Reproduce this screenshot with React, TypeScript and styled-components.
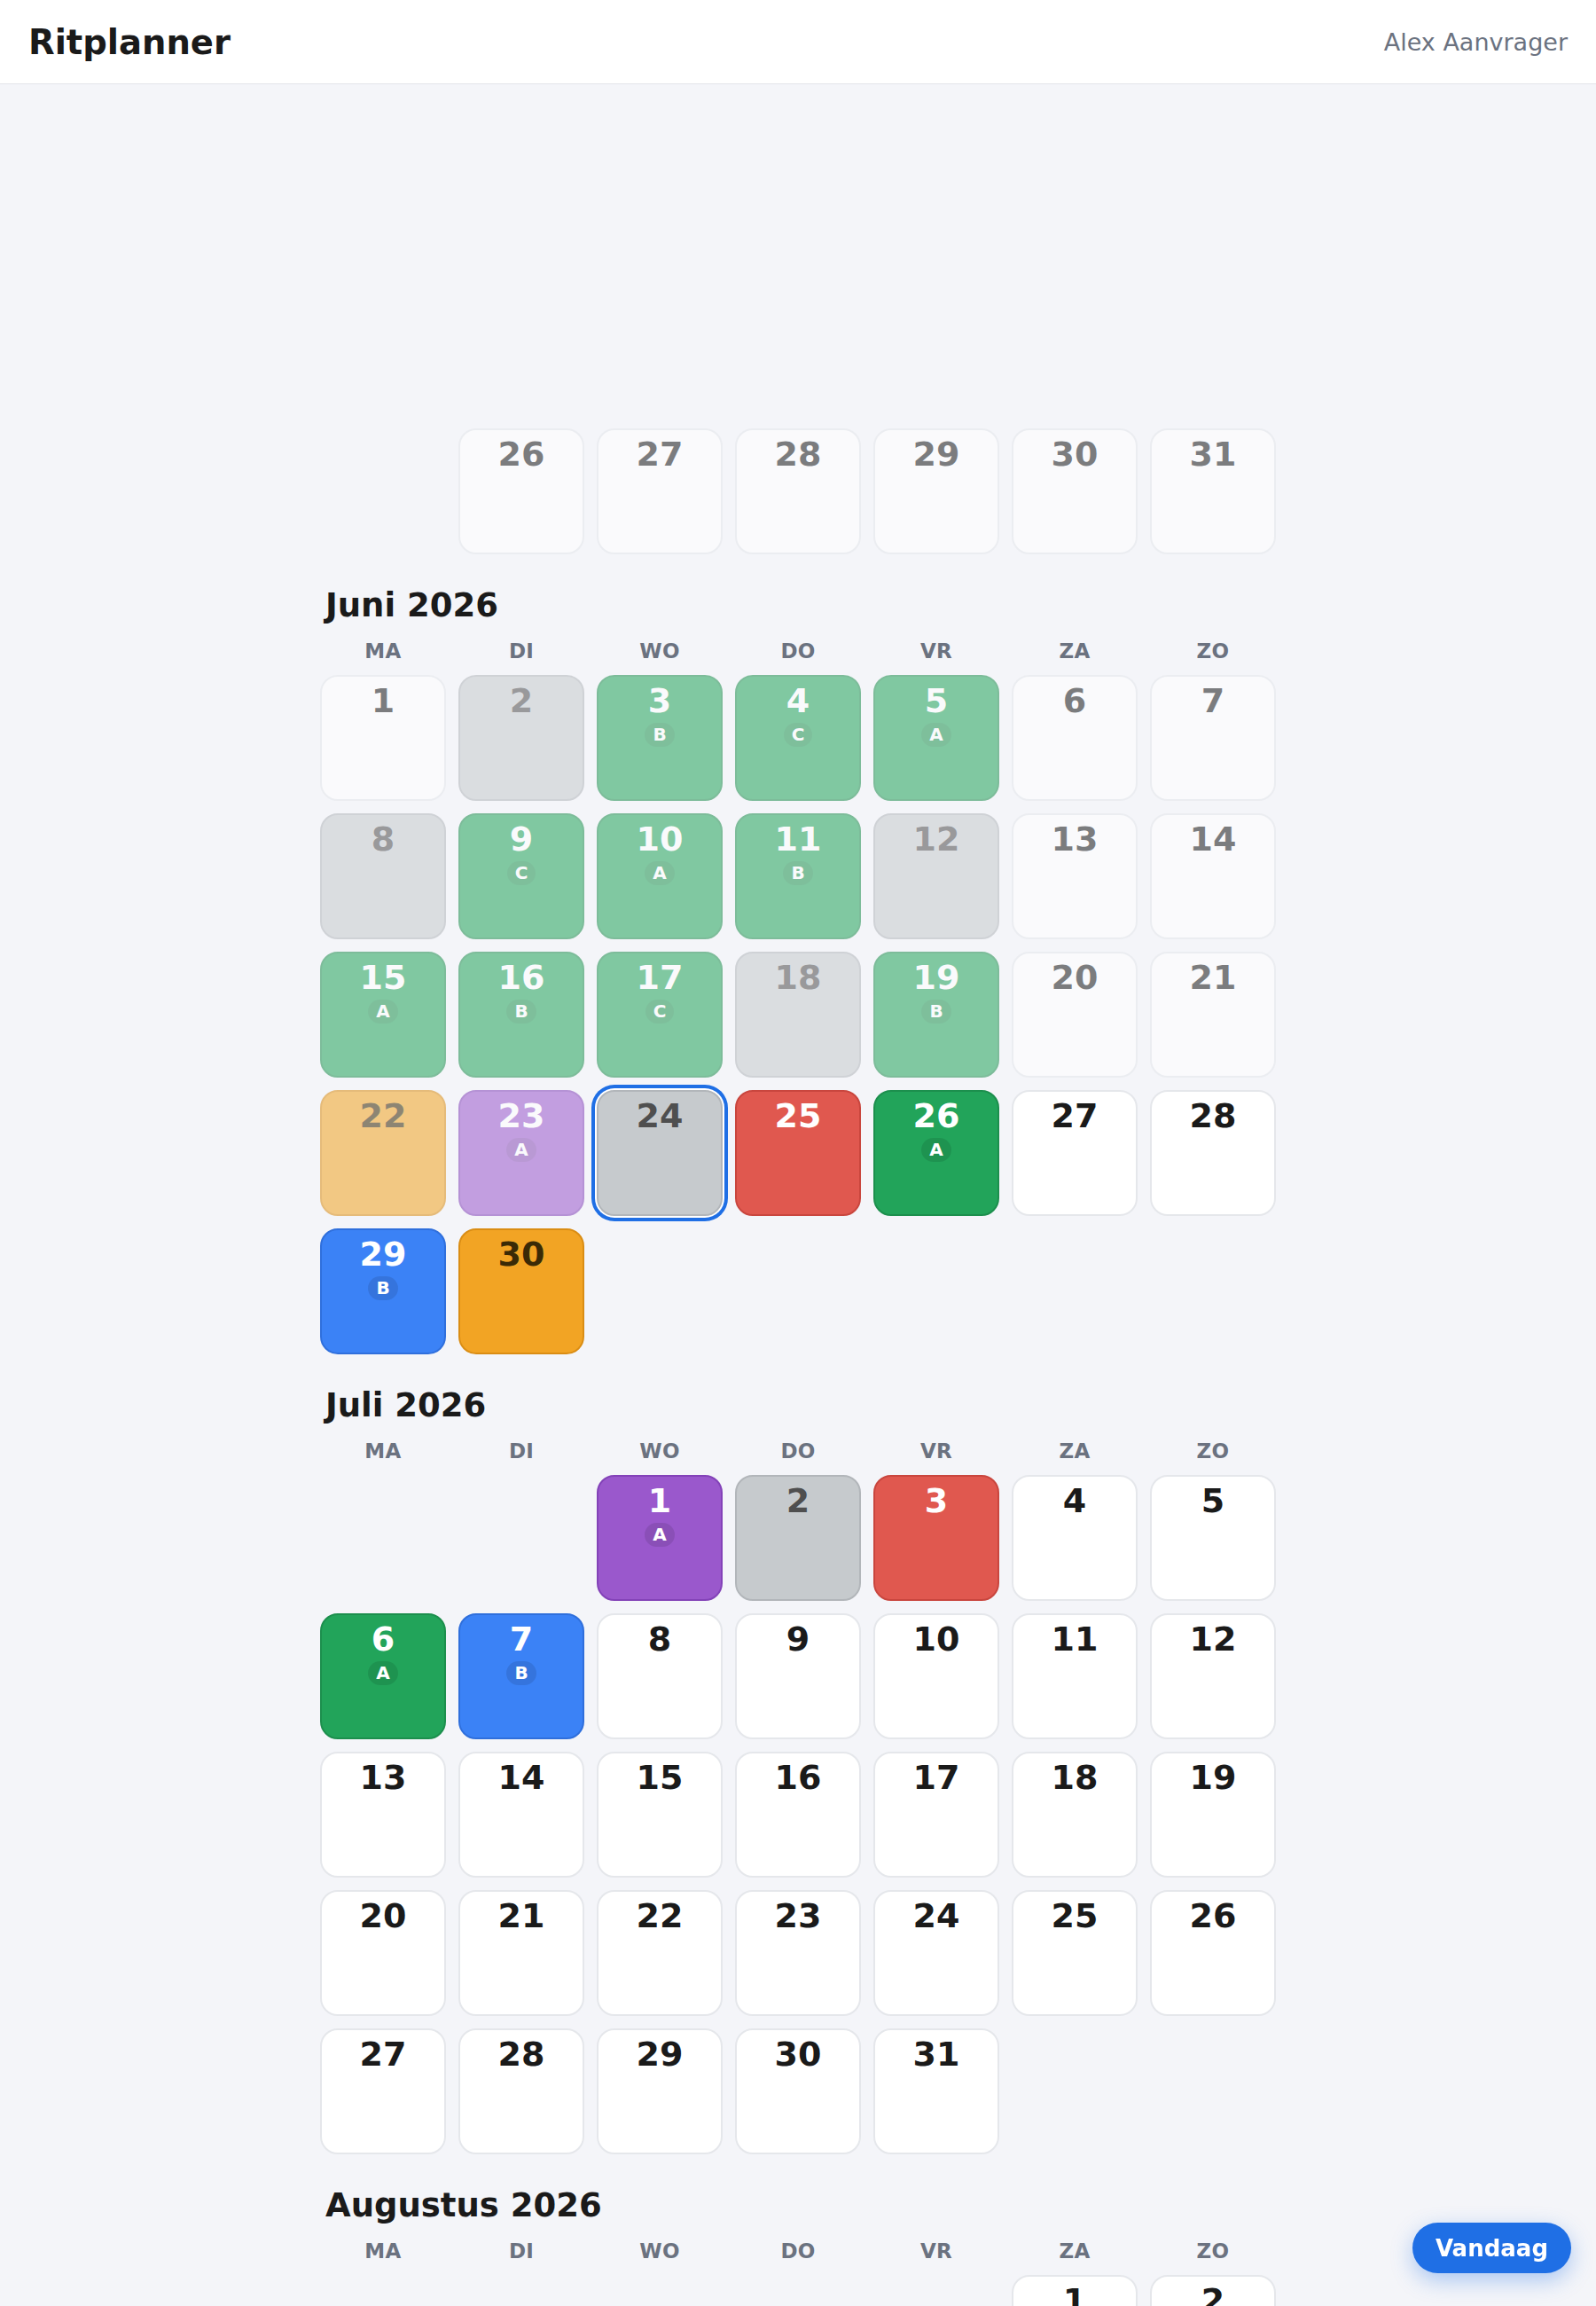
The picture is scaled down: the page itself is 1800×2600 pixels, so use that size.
import styled, { createGlobalStyle, css } from "styled-components";

type Kind = "open" | "closed" | "ride" | "cancelled" | "pending" | "assigned" | "request";

type Day = {
    day: number;
    kind: Kind;
    badge?: string;
    past?: boolean;
    today?: boolean;
};

type Month = {
    title?: string;
    offset: number;
    days: Day[];
};

const WEEKDAYS = ["MA", "DI", "WO", "DO", "VR", "ZA", "ZO"];

const range = (from: number, to: number, kind: Kind, past = false): Day[] => {
    const out: Day[] = [];
    for (let d = from; d <= to; d++) out.push({ day: d, kind, past });
    return out;
};

const months: Month[] = [
    // laatste week van mei, kop is al uit beeld gescrold
    { offset: 1, days: range(26, 31, "open", true) },
    {
        title: "Juni 2026",
        offset: 0,
        days: [
            { day: 1, kind: "open", past: true },
            { day: 2, kind: "closed", past: true },
            { day: 3, kind: "ride", badge: "B", past: true },
            { day: 4, kind: "ride", badge: "C", past: true },
            { day: 5, kind: "ride", badge: "A", past: true },
            { day: 6, kind: "open", past: true },
            { day: 7, kind: "open", past: true },
            { day: 8, kind: "closed", past: true },
            { day: 9, kind: "ride", badge: "C", past: true },
            { day: 10, kind: "ride", badge: "A", past: true },
            { day: 11, kind: "ride", badge: "B", past: true },
            { day: 12, kind: "closed", past: true },
            { day: 13, kind: "open", past: true },
            { day: 14, kind: "open", past: true },
            { day: 15, kind: "ride", badge: "A", past: true },
            { day: 16, kind: "ride", badge: "B", past: true },
            { day: 17, kind: "ride", badge: "C", past: true },
            { day: 18, kind: "closed", past: true },
            { day: 19, kind: "ride", badge: "B", past: true },
            { day: 20, kind: "open", past: true },
            { day: 21, kind: "open", past: true },
            { day: 22, kind: "pending", past: true },
            { day: 23, kind: "request", badge: "A", past: true },
            { day: 24, kind: "closed", today: true },
            { day: 25, kind: "cancelled" },
            { day: 26, kind: "ride", badge: "A" },
            { day: 27, kind: "open" },
            { day: 28, kind: "open" },
            { day: 29, kind: "assigned", badge: "B" },
            { day: 30, kind: "pending" },
        ],
    },
    {
        title: "Juli 2026",
        offset: 2,
        days: [
            { day: 1, kind: "request", badge: "A" },
            { day: 2, kind: "closed" },
            { day: 3, kind: "cancelled" },
            { day: 4, kind: "open" },
            { day: 5, kind: "open" },
            { day: 6, kind: "ride", badge: "A" },
            { day: 7, kind: "assigned", badge: "B" },
            ...range(8, 31, "open"),
        ],
    },
    { title: "Augustus 2026", offset: 5, days: range(1, 31, "open") },
];

const palette: Record<Kind, { bg: string; border: string; text: string }> = {
    open: { bg: "#ffffff", border: "#e5e7eb", text: "#1a1a1a" },
    closed: { bg: "#c6cacd", border: "#b2b6ba", text: "#4f4f4f" },
    ride: { bg: "#22a45a", border: "#1c8f4d", text: "#ffffff" },
    cancelled: { bg: "#e0584f", border: "#c9463e", text: "#ffffff" },
    pending: { bg: "#f2a424", border: "#da8d14", text: "#3a2a06" },
    assigned: { bg: "#3b82f6", border: "#2f6fdc", text: "#ffffff" },
    request: { bg: "#9a58cc", border: "#8342b8", text: "#ffffff" },
};

export default function App() {
    return (
        <>
            <GlobalStyle />
            <Header>
                <Brand>Ritplanner</Brand>
                <User>Alex Aanvrager</User>
            </Header>
            <Main>
                <TopSpacer />
                {months.map((m, i) => (
                    <Section key={i}>
                        {m.title && (
                            <>
                                <MonthTitle>{m.title}</MonthTitle>
                                <Grid>
                                    {WEEKDAYS.map((w) => (
                                        <Weekday key={w}>{w}</Weekday>
                                    ))}
                                </Grid>
                            </>
                        )}
                        <Grid>
                            {Array.from({ length: m.offset }).map((_, j) => (
                                <div key={"e" + j} />
                            ))}
                            {m.days.map((d) => (
                                <Cell key={d.day} $kind={d.kind} $past={d.past} $today={d.today}>
                                    <Num>{d.day}</Num>
                                    {d.badge && <Badge>{d.badge}</Badge>}
                                </Cell>
                            ))}
                        </Grid>
                    </Section>
                ))}
            </Main>
            <TodayButton>Vandaag</TodayButton>
        </>
    );
}

const GlobalStyle = createGlobalStyle`
    * { box-sizing: border-box; }
    body {
        margin: 0;
        background: #f4f5f9;
        font-family: "DejaVu Sans", "Liberation Sans", sans-serif;
        color: #1a1a1a;
    }
`;

const Header = styled.header`
    height: 95px;
    display: flex;
    align-items: center;
    justify-content: space-between;
    padding: 0 32px;
    background: #ffffff;
    border-bottom: 1px solid #e3e5ea;
`;

const Brand = styled.h1`
    margin: 0;
    font-size: 38.5px;
    font-weight: 700;
    color: #1a1a1a;
`;

const User = styled.span`
    font-size: 27px;
    color: #6b7280;
`;

const Main = styled.main`
    width: 1078px;
    margin: 0 auto;
`;

const TopSpacer = styled.div`
    height: 388px;
`;

const Section = styled.section`
    & + & {
        margin-top: 36px;
    }
`;

const MonthTitle = styled.h2`
    margin: 0 0 15px;
    padding-left: 6px;
    font-size: 37px;
    line-height: 44px;
    font-weight: 700;
    color: #1a1a1a;
`;

const Grid = styled.div`
    display: grid;
    grid-template-columns: repeat(7, 1fr);
    gap: 14px;
    & + & {
        margin-top: 13px;
    }
`;

const Weekday = styled.div`
    text-align: center;
    font-size: 23px;
    line-height: 28px;
    font-weight: 700;
    letter-spacing: 0.3px;
    color: #6b7280;
`;

const Cell = styled.div<{ $kind: Kind; $past?: boolean; $today?: boolean }>`
    height: 142px;
    display: flex;
    flex-direction: column;
    align-items: center;
    padding-top: 5px;
    border-radius: 20px;
    border: 2px solid ${(p) => palette[p.$kind].border};
    background: ${(p) => palette[p.$kind].bg};
    color: ${(p) => palette[p.$kind].text};
    ${(p) =>
        p.$past &&
        css`
            opacity: 0.55;
        `}
    ${(p) =>
        p.$today &&
        css`
            box-shadow: 0 0 0 2px #ffffff, 0 0 0 6px #1f6fe5;
        `}
`;

const Num = styled.span`
    font-size: 38px;
    line-height: 44px;
    font-weight: 700;
`;

const Badge = styled.span`
    margin-top: 3px;
    height: 27px;
    padding: 0 9px;
    border-radius: 14px;
    background: rgba(0, 0, 0, 0.1);
    font-size: 20px;
    line-height: 27px;
    font-weight: 700;
    color: #ffffff;
`;

const TodayButton = styled.button`
    position: fixed;
    right: 28px;
    bottom: 37px;
    height: 57px;
    padding: 0 26px;
    border: none;
    border-radius: 29px;
    background: #1f6fe5;
    color: #ffffff;
    font-family: "DejaVu Sans", sans-serif;
    font-size: 26px;
    font-weight: 700;
    box-shadow: 0 8px 24px rgba(31, 111, 229, 0.35);
    cursor: pointer;
`;
